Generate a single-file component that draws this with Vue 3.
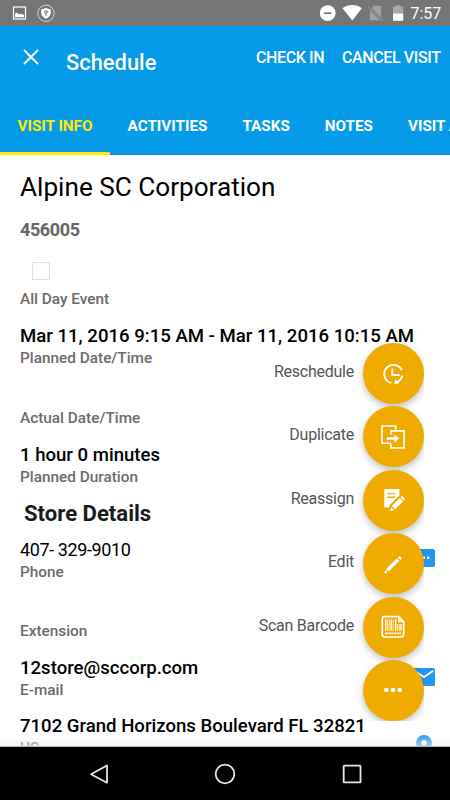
<template>
  <div class="screen">
    <div class="status-bar">
      <svg class="status-left" viewBox="0 0 60 26">
        <rect x="13.5" y="7" width="12" height="12" fill="none" stroke="#fff" stroke-width="1.2" />
        <path d="M15 17.3v-3.5l2-1.2 2.2 1.8 1.8-.7 3 1.4v2.2z" fill="#fff" />
        <circle cx="46" cy="13.3" r="8.2" fill="none" stroke="#d8d8d8" stroke-width="1" />
        <path d="M46 8l4.8 1.5v3.2c0 2.8-2 4.7-4.8 6-2.8-1.3-4.8-3.2-4.8-6V9.5z" fill="#fff" />
        <circle cx="46" cy="12" r="1.3" fill="none" stroke="#757575" stroke-width="1" />
        <path d="M46 13.3v2.7" stroke="#757575" stroke-width="1" />
      </svg>
      <div class="status-right">
        <svg class="status-icons" viewBox="0 0 90 26">
          <circle cx="7.7" cy="13.2" r="7.9" fill="#fff" />
          <path d="M4 13.2h7.4" stroke="#666" stroke-width="1.5" />
          <path d="M22.5 8.2c5.5-4.3 13.8-4.3 19.3 0L32.3 20.4z" fill="#fff" />
          <path d="M53.8 5.7h7.4v14.6H50v-10z" fill="#a3a3a3" />
          <path d="M48.8 7l13.6 14" stroke="#757575" stroke-width="2.6" />
          <path d="M48.3 6.8l14 14" stroke="#a8a8a8" stroke-width="1" />
          <path d="M75.5 5.2h5v1.5h2.7v7H73v-7h2.5z" fill="#a8a8a8" />
          <path d="M73 13.5h10.2v7.3H73z" fill="#fff" />
        </svg>
        <span class="clock">7:57</span>
      </div>
    </div>

    <header class="app-bar">
      <div class="toolbar">
        <button class="close-button" @click="menuOpen = false">
          <svg viewBox="0 0 16 16"><path d="M1 1l14 14M15 1L1 15" stroke="#fff" stroke-width="1.9" /></svg>
        </button>
        <h1 class="title">Schedule</h1>
        <button class="action check-in">CHECK IN</button>
        <button class="action cancel-visit">CANCEL VISIT</button>
      </div>
      <nav class="tabs">
        <button
          v-for="tab in tabs"
          :key="tab.id"
          :class="['tab', { active: activeTab === tab.id }]"
          @click="activeTab = tab.id"
        >
          {{ tab.label }}
        </button>
      </nav>
    </header>

    <main class="content">
      <h2 class="account">Alpine SC Corporation</h2>
      <div class="account-id">456005</div>

      <div class="fields">
        <div v-for="field in visitFields" :key="field.label" class="field">
          <div class="value">
            <span v-if="field.checkbox" class="checkbox"></span>
            <span v-else>{{ field.value }}</span>
          </div>
          <div class="label">{{ field.label }}</div>
        </div>
      </div>

      <h3 class="section">Store Details</h3>

      <div class="fields store">
        <div v-for="field in storeFields" :key="field.label" class="field">
          <div class="value">
            <span :class="{ phone: field.icon === 'sms' }">{{ field.value }}</span>
            <svg v-if="field.icon === 'sms'" class="field-icon sms" viewBox="0 0 22 22">
              <path d="M2 0h18a2 2 0 012 2v14a2 2 0 01-2 2H4l-4 4V2a2 2 0 012-2z" fill="#2196f3" />
              <path d="M4.8 7.6h2.4V10H4.8zM9.6 7.6H12V10H9.6zM14 7.6h2.4V10H14z" fill="#fff" />
            </svg>
            <svg v-if="field.icon === 'mail'" class="field-icon mail" viewBox="0 0 22 18">
              <rect width="22" height="18" rx="1.5" fill="#2196f3" />
              <path d="M1.5 2.8l9.5 6.3 9.3-6.3" fill="none" stroke="#fff" stroke-width="1.9" />
            </svg>
            <svg v-if="field.icon === 'place'" class="field-icon place" viewBox="0 0 16 22">
              <path d="M8 0a7.8 7.8 0 00-7.8 7.8C.2 13.5 8 22 8 22s7.8-8.5 7.8-14.2A7.8 7.8 0 008 0zm0 10.6a2.8 2.8 0 110-5.6 2.8 2.8 0 010 5.6z" fill="#2196f3" />
            </svg>
          </div>
          <div class="label">{{ field.label }}</div>
        </div>
      </div>
      <div class="fade"></div>
    </main>

    <div class="fab-menu">
      <div v-for="item in actions" :key="item.id" class="fab-row">
        <span v-if="menuOpen" class="fab-label">{{ item.label }}</span>
        <button class="fab" @click="menuOpen = !menuOpen">
          <svg v-if="item.id === 'reschedule'" viewBox="0 0 24 24" fill="none" stroke="#fff">
            <path d="M20.8 8.2A9.2 9.2 0 1010.2 21M21.2 13.6a9.2 9.2 0 01-4.6 6.2" stroke-width="1.9" />
            <path d="M11.3 6.5V13h7.5" stroke-width="1.8" />
            <path d="M13.3 22.2l.9-4.7 4.5 3.4z" fill="#fff" stroke="none" />
          </svg>
          <svg v-else-if="item.id === 'duplicate'" viewBox="0 0 24 24" fill="none" stroke="#fff">
            <path d="M14.7 4.8V1H1v17.2h8.6M9.9 9.7V5.9h13.2V23H9.9v-4.6" stroke-width="1.6" />
            <path d="M5.8 13.5h8.5" stroke-width="2.6" />
            <path d="M13.5 9.6l4.7 3.9-4.7 3.9z" fill="#fff" stroke="none" />
          </svg>
          <svg v-else-if="item.id === 'reassign'" viewBox="0 0 24 24" fill="#fff">
            <path d="M3.3 1h15.2v6.4l-9.8 9.7-.6 2.3H3.3z" />
            <path d="M6.3 5.6H14M6.3 9.3H14" stroke="#f0ab00" stroke-width="1.4" />
            <path d="M10.9 18l8-7.9 3.2 3.2-8 7.9zM19.6 9.3L21 8l3.2 3.1-1.3 1.3zM10.1 19.2L13 22l-3.9 1.3z" />
          </svg>
          <svg v-else-if="item.id === 'edit'" viewBox="0 0 24 24" fill="#fff">
            <path d="M4.9 17.2L16 6.2l2.5 2.5L7.4 19.7zM16.8 5.4l1.6-1.5L21 6.4l-1.7 1.5zM4.2 18l2.5 2.5-3.3 1.1z" />
          </svg>
          <svg v-else-if="item.id === 'barcode'" viewBox="0 0 24 24" fill="none" stroke="#fff">
            <path d="M3.5 1.7h14.2l5 4.7V19a3 3 0 01-3 3H4a2.7 2.7 0 01-2.7-2.7V4a2.3 2.3 0 012.2-2.3z" stroke-width="1.7" />
            <path d="M17 1.7v5.5h5.5z" fill="#fff" stroke="none" />
            <path d="M4.8 4.3v11.5M10.2 4.3v11.5M14.7 4.3v11.5M20 9v6.8" stroke-width="1.3" />
            <path d="M6.7 4.3v11.5M8.2 4.3v11.5M12.2 4.3v11.5M16.7 9v6.8M18.3 9v6.8" stroke-width=".8" />
            <path d="M4.2 18.3h16.2" stroke-width="1.8" stroke-dasharray="2.3 .7" />
          </svg>
          <svg v-else viewBox="0 0 24 24" fill="#fff">
            <circle cx="5.3" cy="12" r="2.3" />
            <circle cx="12" cy="12" r="2.3" />
            <circle cx="18.7" cy="12" r="2.3" />
          </svg>
        </button>
      </div>
    </div>

    <footer class="nav-bar">
      <svg viewBox="0 0 24 24"><path d="M20 3.5v17.3L4 12.2z" /></svg>
      <svg viewBox="0 0 24 24"><circle cx="12" cy="12" r="9.3" /></svg>
      <svg viewBox="0 0 24 24"><rect x="3.7" y="3.7" width="16.8" height="16.6" rx=".6" /></svg>
    </footer>
  </div>
</template>

<script setup>
import { ref } from 'vue'

const activeTab = ref('info')
const menuOpen = ref(true)

const tabs = [
  { id: 'info', label: 'VISIT INFO' },
  { id: 'activities', label: 'ACTIVITIES' },
  { id: 'tasks', label: 'TASKS' },
  { id: 'notes', label: 'NOTES' },
  { id: 'more', label: 'VISIT A' }
]

const visitFields = [
  { label: 'All Day Event', checkbox: true },
  { label: 'Planned Date/Time', value: 'Mar 11, 2016 9:15 AM - Mar 11, 2016 10:15 AM' },
  { label: 'Actual Date/Time', value: '' },
  { label: 'Planned Duration', value: '1 hour 0 minutes' }
]

const storeFields = [
  { label: 'Phone', value: '407- 329-9010', icon: 'sms' },
  { label: 'Extension', value: '' },
  { label: 'E-mail', value: '12store@sccorp.com', icon: 'mail' },
  { label: 'US', value: '7102 Grand Horizons Boulevard FL 32821', icon: 'place' }
]

const actions = [
  { id: 'reschedule', label: 'Reschedule' },
  { id: 'duplicate', label: 'Duplicate' },
  { id: 'reassign', label: 'Reassign' },
  { id: 'edit', label: 'Edit' },
  { id: 'barcode', label: 'Scan Barcode' },
  { id: 'more', label: '' }
]
</script>

<style>
body {
  margin: 0;
  overflow: hidden;
}
</style>

<style scoped>
.screen {
  position: relative;
  display: flex;
  flex-direction: column;
  width: 450px;
  height: 800px;
  overflow: hidden;
  background: #fff;
  font-family: Roboto, 'Noto Sans', sans-serif;
}

button {
  padding: 0;
  border: 0;
  background: none;
  color: inherit;
  font-family: inherit;
  white-space: nowrap;
  cursor: pointer;
}

h1,
h2,
h3 {
  margin: 0;
}

.status-bar {
  display: flex;
  justify-content: space-between;
  flex: none;
  height: 26px;
  background: #757575;
}

.status-left {
  width: 60px;
  height: 26px;
}

.status-right {
  display: flex;
  width: 130px;
}

.status-icons {
  flex: none;
  width: 90px;
  height: 26px;
}

.clock {
  margin-left: .5px;
  color: #fff;
  font-size: 16px;
  line-height: 28px;
}

.app-bar {
  flex: none;
  height: 129px;
  box-sizing: border-box;
  background: linear-gradient(#059be8 128px, #0589d6 128px);
  color: #fff;
}

.toolbar {
  display: flex;
  height: 72px;
  padding-left: 23px;
}

.close-button {
  width: 16px;
  height: 62px;
}

.close-button svg {
  display: block;
  width: 16px;
  height: 16px;
}

.title {
  width: 190px;
  margin-left: 27px;
  font-size: 21.9px;
  font-weight: 500;
  line-height: 73px;
}

.action {
  height: 63px;
  font-size: 16px;
  font-weight: 500;
  letter-spacing: -.38px;
  line-height: 63px;
  text-align: left;
}

.check-in {
  width: 86px;
}

.tabs {
  display: flex;
  height: 57px;
  overflow: hidden;
}

.tab {
  flex: none;
  box-sizing: border-box;
  height: 57px;
  padding: 0 17.5px;
  border-bottom: 3px solid transparent;
  font-size: 15.25px;
  font-weight: 700;
  line-height: 56px;
}

.tab.active {
  border-bottom-color: #ffea00;
  color: #ffea00;
}

.content {
  position: relative;
  flex: none;
  height: 592px;
  box-sizing: border-box;
  padding: 14px 15px 0 20px;
  overflow: hidden;
  color: #000;
}

.account {
  height: 36px;
  font-size: 26.15px;
  font-weight: 400;
  line-height: 36px;
}

.account-id {
  height: 24px;
  margin-top: 13px;
  color: #666;
  font-size: 18px;
  font-weight: 700;
  letter-spacing: -.4px;
  line-height: 24px;
}

.fields {
  display: flex;
  flex-direction: column;
  gap: 14.5px;
  margin-top: 22.5px;
}

.value {
  display: flex;
  justify-content: space-between;
  height: 24px;
  font-size: 18.58px;
  font-weight: 500;
  line-height: 24px;
  white-space: nowrap;
}

.label {
  height: 21px;
  color: #6b6b6b;
  font-size: 15.35px;
  font-weight: 500;
  line-height: 21px;
}

.phone {
  font-size: 18px;
  font-weight: 400;
  letter-spacing: -.4px;
}

.checkbox {
  width: 16px;
  height: 16px;
  margin: -3px 0 0 12px;
  border: 1px solid #e0e0e0;
}

.section {
  height: 30px;
  margin: 10px 0 0 4px;
  color: #1a1a1a;
  font-size: 22.1px;
  font-weight: 700;
  line-height: 31px;
}

.store {
  gap: 13.7px;
  margin-top: 10.2px;
}

.field-icon {
  flex: none;
  overflow: visible;
}

.sms {
  width: 22px;
  height: 22px;
  margin-top: 10.5px;
}

.mail {
  width: 22px;
  height: 18px;
  margin-top: 12px;
}

.place {
  width: 16px;
  height: 22px;
  margin: 21px 3px 0 0;
}

.fade {
  position: absolute;
  right: 0;
  bottom: 0;
  left: 0;
  height: 12px;
  border-bottom: 1px solid #b8b8b8;
  background: linear-gradient(rgba(238, 238, 238, 0), rgba(238, 238, 238, .6));
}

.fab-menu {
  position: absolute;
  top: 343px;
  right: 26px;
  display: flex;
  flex-direction: column;
  gap: 2.4px;
  width: 190px;
  height: 378px;
  overflow: hidden;
  pointer-events: none;
}

.fab-row {
  display: flex;
  justify-content: flex-end;
  flex: none;
  height: 61px;
}

.fab-label {
  margin-right: 9px;
  color: #555;
  font-size: 16px;
  letter-spacing: -.25px;
  line-height: 57px;
}

.fab {
  display: flex;
  align-items: center;
  justify-content: center;
  width: 61px;
  height: 61px;
  border-radius: 50%;
  background: #f0ab00;
  box-shadow: 0 3px 7px rgba(0, 0, 0, .25);
  pointer-events: auto;
}

.fab svg {
  width: 24px;
  height: 24px;
  margin-right: 1px;
}

.nav-bar {
  display: flex;
  align-items: center;
  justify-content: center;
  gap: 102.5px;
  flex: none;
  height: 53px;
  background: #000;
}

.nav-bar svg {
  width: 24px;
  height: 24px;
  fill: none;
  stroke: #e6e6e6;
  stroke-width: 1.8px;
  stroke-linejoin: round;
}
</style>
